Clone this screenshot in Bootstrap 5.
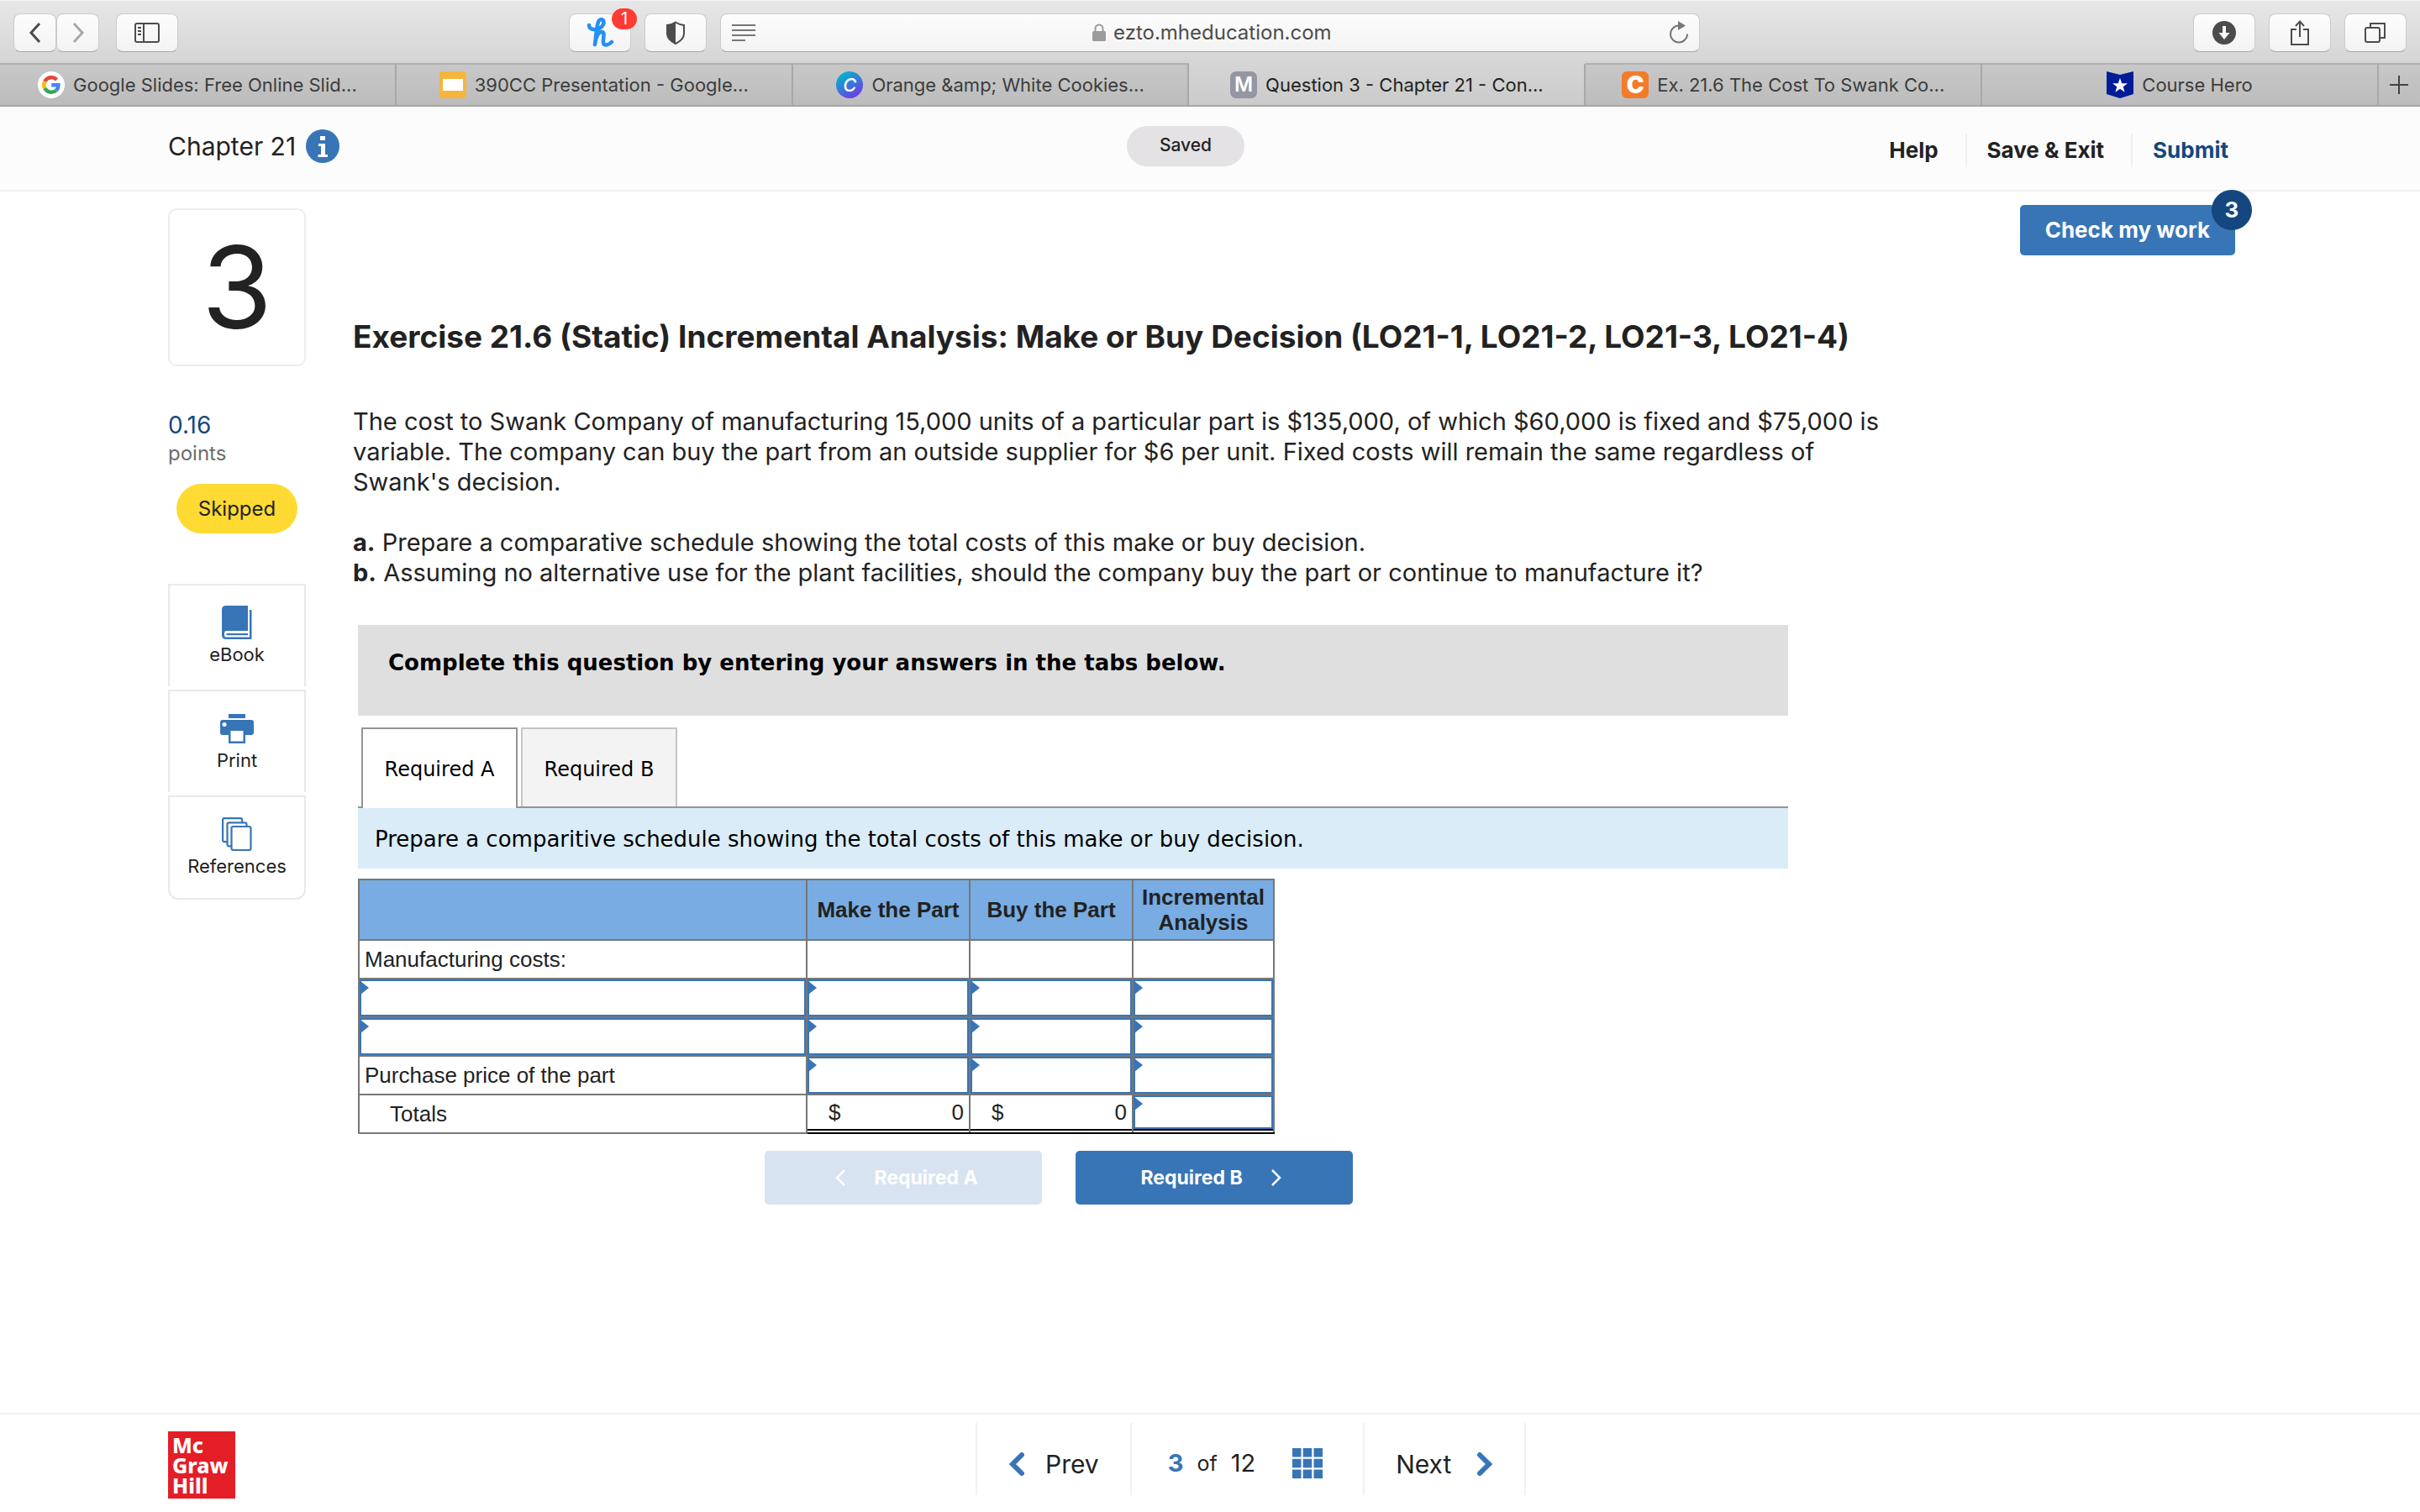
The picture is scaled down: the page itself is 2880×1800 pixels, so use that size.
<!DOCTYPE html>
<html lang="en">
<head>
<meta charset="utf-8">
<meta name="viewport" content="width=device-width, initial-scale=1">
<title>Question 3 - Chapter 21 - Connect</title>
<link href="https://cdn.jsdelivr.net/npm/bootstrap@5.3.0/dist/css/bootstrap.min.css" rel="stylesheet">
<style>
  :root { --mh-blue: #3875b7; --mh-navy: #14477f; --ink: #222; --rule: #f0f0f0; }
  body { font-family: Inter, "Open Sans", sans-serif; font-size: 29px; line-height: 36px; color: var(--ink); background: #fff; }
  svg { display: block; flex: none; }
  a { text-decoration: none; color: inherit; }

  /* browser toolbar */
  .chrome-bar { display: grid; grid-template-columns: 1fr minmax(0, 1166px) 1fr; padding: 15px 16px 13px; height: 75px; background: linear-gradient(#e7e7e7, #d5d5d5); border-top: 1px solid #f4f4f4; }
  .chrome-btn { width: 74px; height: 46px; padding: 0; display: flex; align-items: center; justify-content: center; border: 1px solid #cbcbcb; border-bottom-color: #a6a6a6; border-radius: 8px; background: linear-gradient(#fdfdfd, #f3f3f3); color: #4c4c4c; position: relative; }
  .chrome-btn.half { width: 51px; }
  .chrome-btn.side { margin-left: 20px; }
  .alert-count { position: absolute; top: -7px; right: -8px; width: 30px; height: 25px; border-radius: 13px; background: #ff3b35; color: #fff; font-size: 20px; line-height: 25px; text-align: center; }
  .address { display: flex; align-items: center; height: 46px; padding: 0 12px; border: 1px solid #cbcbcb; border-bottom-color: #a6a6a6; border-radius: 8px; background: linear-gradient(#fdfdfd, #f3f3f3); }
  .address input { width: 262px; padding: 0; border: 0; background: none; font-size: 24px; line-height: 30px; color: #4c4c4c; }
  .plain-btn { padding: 0; border: 0; background: none; color: inherit; }

  .tab-strip { height: 52px; background: linear-gradient(#c8c8c8, #bcbcbc); border-bottom: 2px solid #a5a5a5; }
  .tab-strip .nav-item { flex: 1 1 0; min-width: 0; border-top: 2px solid #b0b0b0; border-right: 2px solid #a8a8a8; }
  .tab-strip .nav-item.current { background: linear-gradient(#d5d5d5, #cbcbcb); border-top-color: #d5d5d5; }
  .tab-strip .nav-item.current a { color: #222; }
  .tab-strip a { display: flex; align-items: center; justify-content: center; gap: 10px; height: 48px; font-size: 22px; line-height: 28px; color: #3c3c3c; white-space: nowrap; }
  .fav { width: 32px; height: 32px; flex: none; display: flex; align-items: center; justify-content: center; color: #fff; font-size: 24px; line-height: 32px; font-weight: 600; }
  .fav-m { background: #9496a3; border-radius: 7px; }
  .fav-canva { background: linear-gradient(150deg, #00b8cc 10%, #7a2ee6 95%); border-radius: 50%; font-style: italic; font-weight: 500; font-size: 22px; }
  .fav-chegg { background: #f47b29; border-radius: 6px; font-weight: 900; font-size: 28px; }
  .new-tab { width: 49px; border-top: 2px solid #b0b0b0; }

  /* assignment header */
  .hw-header { display: grid; grid-template-columns: minmax(0, 1141fr) auto minmax(0, 1171fr); align-items: start; padding: 22px 228px 0 200px; height: 101px; background: #fcfcfc; border-bottom: 2px solid var(--rule); }
  .chapter { font-size: 30px; line-height: 36px; padding-top: 5px; }
  .chapter svg { margin-left: 12px; }
  .saved-pill { width: 140px; height: 48px; padding: 8px 0; border-radius: 24px; background: #e4e2e5; font-size: 21px; line-height: 30px; font-weight: 500; text-align: center; margin-top: 1px; }
  .hw-links { padding-top: 10px; }
  .hw-links a { font-size: 26px; line-height: 40px; font-weight: 700; white-space: nowrap; }
  .hw-links a + a { border-left: 2px solid var(--rule); padding-left: 24px; margin-left: 32px; }
  .hw-links .submit { color: var(--mh-navy); }

  /* left rail */
  .work-area { padding: 16px 220px 0 200px; }
  .rail { width: 164px; flex: none; padding-top: 4px; margin-right: 56px; }
  .q-number { height: 188px; border: 2px solid #ededed; border-radius: 10px; font-size: 136px; line-height: 184px; text-align: center; }
  .score { margin-top: 53px; font-size: 28px; line-height: 34px; color: var(--mh-navy); }
  .score-unit { font-size: 24px; line-height: 34px; color: #6c6c6c; }
  .skip-pill { margin: 19px 10px 60px; padding: 15px 0 14px; border-radius: 30px; background: #ffda33; font-size: 24px; line-height: 30px; text-align: center; }
  .tool { display: flex; flex-direction: column; align-items: center; width: 100%; height: 122px; padding: 24px 0 0; border: 2px solid #e9e9e9; border-bottom: 0; background: #fff; color: var(--ink); font-size: 22px; line-height: 28px; }
  .tool + .tool { margin-top: 4px; }
  .tool:last-child { height: 124px; border-bottom: 2px solid #e9e9e9; border-radius: 0 0 12px 12px; }
  .tool svg { height: 40px; margin-bottom: 4px; }

  /* question */
  .btn-mh { --bs-btn-color: #fff; --bs-btn-bg: var(--mh-blue); --bs-btn-border-width: 0; --bs-btn-hover-color: #fff; --bs-btn-hover-bg: var(--mh-navy); --bs-btn-disabled-color: #fff; --bs-btn-disabled-bg: #d7e3f1; --bs-btn-disabled-opacity: 1; --bs-btn-border-radius: 5px; --bs-btn-font-weight: 700; }
  .check-btn { height: 60px; padding: 0 30px; font-size: 26px; line-height: 58px; position: relative; }
  .tries { position: absolute; top: -18px; right: -20px; width: 48px; height: 48px; border-radius: 50%; background: var(--mh-navy); font-size: 26px; line-height: 48px; }
  .q-title { margin: 75px 0 60px; font-size: 37px; line-height: 44px; font-weight: 700; }
  .q-text { max-width: 1846px; padding-top: 1px; margin-bottom: 44px; }
  .q-text p { margin: 0 0 36px; }
  .answer { max-width: 1708px; padding-left: 6px; color: #000; font-family: "DejaVu Sans", Verdana, sans-serif; }
  .instruct { height: 108px; padding: 30px 36px; background: #dfdfdf; font-size: 26px; line-height: 30px; font-weight: 700; }
  .req-tabs { margin-top: 14px; padding-left: 4px; gap: 4px; border-bottom: 2px solid #949494; }
  .req-tabs button { width: 186px; height: 94px; border: 2px solid #c4c4c4; border-bottom: 0; background: #f3f3f3; font-size: 24px; line-height: 30px; padding: 4px 0 0; color: #000; white-space: nowrap; }
  .req-tabs .on { height: 96px; margin-bottom: -2px; padding-top: 2px; border-color: #949494; background: #fff; }
  .req-note { padding: 22px 20px 20px; background: #daecf8; font-size: 26px; line-height: 30px; }

  .schedule { width: 1089px; margin: 12px 0 20px; border-collapse: collapse; table-layout: fixed; font-family: "Liberation Sans", Arial, sans-serif; font-size: 26px; line-height: 30px; color: var(--ink); }
  .schedule th, .schedule td { border: 2px solid #777; padding: 0; height: 46px; }
  .schedule thead th { height: 72px; padding: 0; background: #78ace2; text-align: center; font-weight: 700; }
  .schedule tbody th { font-weight: 400; padding-left: 6px; }
  .schedule tbody th.inset { padding-left: 36px; }
  .entry { position: relative; }
  .entry input { display: block; width: 100%; height: 44px; padding: 0 8px; border: 2px solid var(--mh-blue); border-radius: 0; background: #fff; font-size: 26px; }
  .entry::before { content: ""; position: absolute; left: 1px; top: 2px; width: 10px; height: 16px; background: var(--mh-blue); clip-path: polygon(0 0, 100% 50%, 0 100%); }
  .schedule .sum { border-bottom-color: #000; vertical-align: top; }
  .sum-line { height: 42px; border-bottom: 2px solid #000; }
  .sum .sum-line input { height: 40px; }
  .money { display: flex; justify-content: space-between; padding: 5px 6px 0 25px; }
  .step-row { gap: 40px; padding-right: 34px; font-family: Inter, sans-serif; }
  .step-row .btn { width: 330px; height: 64px; display: flex; align-items: center; justify-content: center; gap: 34px; font-size: 23px; line-height: 30px; }

  /* footer */
  .hw-footer { height: 118px; padding: 0 200px; border-top: 2px solid var(--rule); }
  .mh-logo { width: 80px; height: 80px; margin-top: 20px; padding: 4px 0 0 5px; background: #e31e26; color: #fff; font-family: "Noto Sans", sans-serif; font-weight: 800; font-size: 25px; line-height: 24px; }
  .pager { margin: 10px 0 0 881px; height: 86px; border-right: 2px solid var(--rule); }
  .pager > * { border-left: 2px solid var(--rule); display: flex; align-items: center; }
  .pager a { font-size: 30px; padding: 12px 37px 0; }
  .pager .of-word { font-size: 25px; }
  .pager .count { padding: 10px 48px 0 43px; font-size: 29px; }
  .pager .count svg { margin-left: 44px; }
  .pager .here { color: var(--mh-blue); }
  .pager .chev-next { margin-left: 30px; }
</style>
<script src="https://cdn.jsdelivr.net/npm/bootstrap@5.3.0/dist/js/bootstrap.bundle.min.js"></script>
</head>
<body class="d-flex flex-column min-vh-100">

<div class="chrome-bar">
  <div class="d-flex">
    <button class="chrome-btn half" aria-label="Back"><svg width="16" height="26" viewBox="0 0 16 26" fill="none" stroke="currentColor" stroke-width="3"><path d="M13 2 3 13l10 11"/></svg></button>
    <button class="chrome-btn half" aria-label="Forward"><svg width="16" height="26" viewBox="0 0 16 26" fill="none" stroke="#a8a8a8" stroke-width="3"><path d="M3 2l10 11L3 24"/></svg></button>
    <button class="chrome-btn side me-auto" aria-label="Sidebar"><svg width="30" height="24" viewBox="0 0 30 24" fill="none" stroke="currentColor" stroke-width="2"><rect x="1" y="1" width="28" height="22" rx="2"/><path d="M11 1v22M4 6h4M4 10h4M4 14h4"/></svg></button>
    <div class="d-flex gap-3 me-3">
      <button class="chrome-btn" aria-label="Honey"><svg width="34" height="36" viewBox="0 0 34 36" fill="none" stroke="#2490f5" stroke-width="4.500" stroke-linecap="round" stroke-linejoin="round"><path d="M4 9c0 7 13 7 17-1 2-6-4-8-6-3-2 6-3 17-4 27 1-9 4-15 8-15 5 0 1 9 2 13 1 4 6 3 10-1"/></svg><span class="alert-count">1</span></button>
      <button class="chrome-btn" aria-label="Privacy report"><svg width="24" height="28" viewBox="0 0 24 28"><path d="M12 1.500c3 2 6 3 10 3.500v10c0 5-4 9-10 12C6 24 2 20 2 15V5c4-.5 7-1.500 10-3.500z" fill="none" stroke="#4c4c4c" stroke-width="2"/><path d="M12 1v26C6 24 2 20 2 15V5c4-.5 7-1.500 10-4z" fill="#4c4c4c"/></svg></button>
    </div>
  </div>
  <div class="address">
    <button class="plain-btn" aria-label="Reader view"><svg width="30" height="22" viewBox="0 0 30 22" stroke="#777" stroke-width="2"><path d="M1 2h28M1 8h28M1 14h28M1 20h16"/></svg></button>
    <div class="d-flex align-items-center mx-auto">
      <svg class="me-2" width="18" height="22" viewBox="0 0 18 22"><rect x="1" y="9" width="16" height="12" rx="1.500" fill="#9b9b9b"/><path d="M4.500 10V6a4.500 4.500 0 0 1 9 0v4" fill="none" stroke="#9b9b9b" stroke-width="2"/></svg>
      <input type="text" value="ezto.mheducation.com" aria-label="Address">
    </div>
    <button class="plain-btn" aria-label="Reload"><svg width="24" height="28" viewBox="0 0 24 28"><path d="M12 5.500a10 10 0 1 0 10 10" fill="none" stroke="#777" stroke-width="2"/><path d="M11 0l9 5.500-9 5.500z" fill="#777"/></svg></button>
  </div>
  <div class="d-flex gap-3 justify-content-end">
    <button class="chrome-btn" aria-label="Downloads"><svg width="28" height="28" viewBox="0 0 28 28"><circle cx="14" cy="14" r="14" fill="#4c4c4c"/><path d="M14 6v12" stroke="#fff" stroke-width="4"/><path d="M7.500 14h13L14 22z" fill="#fff"/></svg></button>
    <button class="chrome-btn" aria-label="Share"><svg width="24" height="32" viewBox="0 0 24 32" fill="none" stroke="currentColor" stroke-width="2"><path d="M8 12H2v18h20V12h-6M12 21V3M7 8l5-5.500L17 8"/></svg></button>
    <button class="chrome-btn" aria-label="Show all tabs"><svg width="26" height="26" viewBox="0 0 26 26" fill="none" stroke="currentColor" stroke-width="2"><rect x="1" y="7" width="17" height="17" rx="2"/><path d="M7 7V2h17v17h-6"/></svg></button>
  </div>
</div>

<ul class="nav flex-nowrap tab-strip">
  <li class="nav-item"><a href="#"><svg width="32" height="32" viewBox="0 0 32 32"><circle cx="16" cy="16" r="16" fill="#fff"/><g fill="none" stroke-width="4.400"><path d="M22.500 10A8.700 8.700 0 0 0 8.300 12" stroke="#ea4335"/><path d="M8.300 12a8.700 8.700 0 0 0 0 8" stroke="#fbbc05"/><path d="M8.300 20a8.700 8.700 0 0 0 13.500 2.600" stroke="#34a853"/><path d="M21.800 22.600A8.700 8.700 0 0 0 24.500 16.300H16.200" stroke="#4285f4"/></g></svg><span>Google Slides: Free Online Slid...</span></a></li>
  <li class="nav-item"><a href="#"><svg width="32" height="32" viewBox="0 0 32 32"><rect width="32" height="32" rx="3" fill="#f6b53c"/><rect x="4" y="9" width="24" height="14" fill="#fff"/></svg><span>390CC Presentation - Google...</span></a></li>
  <li class="nav-item"><a href="#"><span class="fav fav-canva">C</span><span>Orange &amp;amp; White Cookies...</span></a></li>
  <li class="nav-item current"><a href="#"><span class="fav fav-m">M</span><span>Question 3 - Chapter 21 - Con...</span></a></li>
  <li class="nav-item"><a href="#"><span class="fav fav-chegg">C</span><span>Ex. 21.6 The Cost To Swank Co...</span></a></li>
  <li class="nav-item"><a href="#"><svg width="32" height="32" viewBox="0 0 32 32"><path d="M0 0l16 4L32 0v27l-16 5-16-5z" fill="#001c98"/><path d="M16 8l2.300 6.200h6.700l-5.300 4 2 6.500L16 20.800l-5.700 3.900 2-6.500-5.300-4h6.700z" fill="#fff"/></svg><span>Course Hero</span></a></li>
  <li class="new-tab d-flex align-items-center justify-content-center"><button class="plain-btn" aria-label="New tab"><svg width="22" height="22" viewBox="0 0 22 22" stroke="#444" stroke-width="2"><path d="M11 0v22M0 11h22"/></svg></button></li>
</ul>

<header class="hw-header">
  <div class="chapter d-flex align-items-center"><span>Chapter 21</span>
    <svg width="40" height="40" viewBox="0 0 40 40" role="img" aria-label="Information"><circle cx="20" cy="20" r="20" fill="#3875b7"/><path d="M17 8h6v5h-6zM15 17h8v13h3v3H14.500v-3H18V20h-3z" fill="#fff"/></svg>
  </div>
  <div class="saved-pill">Saved</div>
  <nav class="hw-links d-flex justify-content-end"><a href="#">Help</a><a href="#">Save &amp; Exit</a><a class="submit" href="#">Submit</a></nav>
</header>

<main class="work-area d-flex align-items-start">
  <aside class="rail">
    <div class="q-number">3</div>
    <div class="score">0.16</div>
    <div class="score-unit">points</div>
    <div class="skip-pill">Skipped</div>
    <div>
      <button class="tool"><svg width="36" viewBox="0 0 36 40" fill="#3875b7"><path d="M5 0h26v30H5q-2 0-2 4t2 3.500h28V5h2.500v35H5q-5 0-5-5V5q0-5 5-5z"/><path d="M5.500 33H31v2.200H5.500z"/></svg>eBook</button>
      <button class="tool"><svg width="40" viewBox="0 0 40 40"><path fill="#3875b7" d="M10 3h20v5H10zM3 10h34q3 0 3 3v12q0 3-3 3h-7v10H10V28H3q-3 0-3-3V13q0-3 3-3z"/><circle cx="5" cy="15.500" r="2.500" fill="#fff"/><path fill="#fff" d="M12.500 23h15v12.500h-15z"/></svg>Print</button>
      <button class="tool"><svg width="36" viewBox="0 0 36 40" fill="#fff" stroke="#3875b7" stroke-width="2.200"><rect x="1.100" y="1.100" width="23" height="28" rx="2"/><rect x="6.500" y="6.300" width="23" height="28" rx="2"/><rect x="11.500" y="11" width="23" height="28" rx="2"/></svg>References</button>
    </div>
  </aside>

  <section class="flex-grow-1">
    <div class="d-flex justify-content-end">
      <button class="btn btn-mh check-btn">Check my work<span class="tries">3</span></button>
    </div>
    <h1 class="q-title">Exercise 21.6 (Static) Incremental Analysis: Make or Buy Decision (LO21-1, LO21-2, LO21-3, LO21-4)</h1>
    <div class="q-text">
      <p>The cost to Swank Company of manufacturing 15,000 units of a particular part is $135,000, of which $60,000 is fixed and $75,000 is variable. The company can buy the part from an outside supplier for $6 per unit. Fixed costs will remain the same regardless of Swank's decision.</p>
      <div><b>a.</b> Prepare a comparative schedule showing the total costs of this make or buy decision.</div>
      <div><b>b.</b> Assuming no alternative use for the plant facilities, should the company buy the part or continue to manufacture it?</div>
    </div>

    <div class="answer">
      <div class="instruct">Complete this question by entering your answers in the tabs below.</div>
      <div class="req-tabs d-flex align-items-start" role="tablist">
        <button class="on" role="tab" aria-selected="true">Required A</button>
        <button role="tab" aria-selected="false">Required B</button>
      </div>
      <div class="req-note">Prepare a comparitive schedule showing the total costs of this make or buy decision.</div>

      <table class="schedule">
        <colgroup><col style="width:533px"><col style="width:194px"><col style="width:194px"><col style="width:168px"></colgroup>
        <thead>
          <tr><th></th><th>Make the Part</th><th>Buy the Part</th><th>Incremental Analysis</th></tr>
        </thead>
        <tbody>
          <tr><th scope="row">Manufacturing costs:</th><td></td><td></td><td></td></tr>
          <tr><td class="entry"><input type="text" aria-label="Cost item 1"></td><td class="entry"><input type="text" aria-label="Cost item 1, make"></td><td class="entry"><input type="text" aria-label="Cost item 1, buy"></td><td class="entry"><input type="text" aria-label="Cost item 1, incremental"></td></tr>
          <tr><td class="entry"><input type="text" aria-label="Cost item 2"></td><td class="entry"><input type="text" aria-label="Cost item 2, make"></td><td class="entry"><input type="text" aria-label="Cost item 2, buy"></td><td class="entry"><input type="text" aria-label="Cost item 2, incremental"></td></tr>
          <tr><th scope="row">Purchase price of the part</th><td class="entry"><input type="text" aria-label="Purchase price, make"></td><td class="entry"><input type="text" aria-label="Purchase price, buy"></td><td class="entry"><input type="text" aria-label="Purchase price, incremental"></td></tr>
          <tr><th scope="row" class="inset">Totals</th><td class="sum"><div class="sum-line money"><span>$</span><span>0</span></div></td><td class="sum"><div class="sum-line money"><span>$</span><span>0</span></div></td><td class="sum entry"><div class="sum-line"><input type="text" aria-label="Totals, incremental"></div></td></tr>
        </tbody>
      </table>

      <div class="step-row d-flex justify-content-center">
        <button class="btn btn-mh" disabled><svg class="ms-2" width="12" height="20" viewBox="0 0 12 20" fill="none" stroke="#fff" stroke-width="2.500"><path d="M11 1 2 10l9 9"/></svg>Required A</button>
        <button class="btn btn-mh">Required B<svg class="me-2" width="12" height="20" viewBox="0 0 12 20" fill="none" stroke="#fff" stroke-width="2.500"><path d="M1 1l9 9-9 9"/></svg></button>
      </div>
    </div>
  </section>
</main>

<footer class="hw-footer d-flex align-items-start mt-auto">
  <div class="mh-logo">Mc<br>Graw<br>Hill</div>
  <nav class="pager d-flex">
    <a href="#"><svg class="me-4" width="20" height="30" viewBox="0 0 20 30" fill="none" stroke="#3875b7" stroke-width="6" stroke-linecap="round"><path d="M16 4 5 15l11 11"/></svg>Prev</a>
    <div class="count"><b class="here">3</b><span class="of-word mx-3">of</span><span>12</span>
      <svg width="36" height="36" viewBox="0 0 36 36" fill="#3875b7"><path d="M0 0h10.500v10.500H0zM12.700 0h10.500v10.500H12.700zM25.500 0H36v10.500H25.500zM0 12.700h10.500v10.500H0zM12.700 12.700h10.500v10.500H12.700zM25.500 12.700H36v10.500H25.500zM0 25.500h10.500V36H0zM12.700 25.500h10.500V36H12.700zM25.500 25.500H36V36H25.500z"/></svg></div>
    <a href="#">Next<svg class="chev-next" width="20" height="30" viewBox="0 0 20 30" fill="none" stroke="#3875b7" stroke-width="6" stroke-linecap="round"><path d="M4 4l11 11L4 26"/></svg></a>
  </nav>
</footer>
</body>
</html>
